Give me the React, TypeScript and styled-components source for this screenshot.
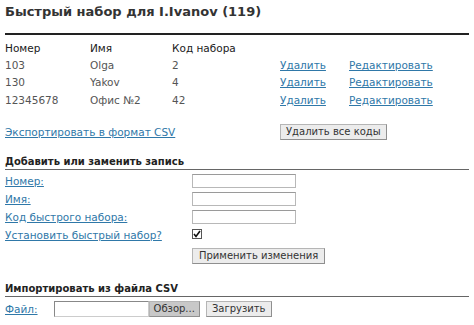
import React from "react";
import styled, { createGlobalStyle } from "styled-components";

const Global = createGlobalStyle`
  html, body { margin: 0; padding: 0; background: #fff; }
  body { font-family: "DejaVu Sans", Verdana, sans-serif; font-size: 10.5px; color: #333; }
`;

const Page = styled.div`
  padding: 3px 5px 0 5px;
  width: 464px;
`;

const Title = styled.h1`
  margin: 0;
  font-size: 13px;
  font-weight: bold;
  color: #333;
  line-height: 18px;
  height: 18px;
`;

const ThickRule = styled.div`
  margin-top: 12px;
  height: 2px;
  background: #222;
`;

const Grid = styled.div`
  margin-top: 4px;
  display: grid;
  grid-template-columns: 85px 82px 108px 69px auto;
  grid-auto-rows: 17.4px;
  align-items: center;
`;

const HeadCell = styled.div`
  color: #1a1a1a;
  font-weight: 500;
`;

const Cell = styled.div`
  color: #555;
  white-space: nowrap;
`;

const Link = styled.a`
  color: #2f78a8;
  text-decoration: underline;
  cursor: pointer;
  white-space: nowrap;
`;

const ActionsRow = styled.div`
  margin-top: 15px;
  display: grid;
  grid-template-columns: 275px auto;
  align-items: center;
`;

const Button = styled.button<{ $dark?: boolean; $pad?: number }>`
  font-family: "DejaVu Sans", Verdana, sans-serif;
  font-size: 10px;
  color: #333;
  height: 16px;
  padding: 0 ${(p) => p.$pad ?? 5}px;
  line-height: 14px;
  background: ${(p) => (p.$dark ? "#c8c8c8" : "#ececec")};
  border: 1px solid #b5b5b5;
  border-right-color: #8f8f8f;
  border-bottom-color: #8f8f8f;
  border-radius: 0;
  margin: 0;
  white-space: nowrap;
  display: block;
`;

const SectionTitle = styled.div<{ $top: number }>`
  margin-top: ${(p) => p.$top}px;
  font-weight: bold;
  font-size: 10px;
  color: #222;
  line-height: 13px;
  padding-bottom: 1px;
  border-bottom: 1px solid #666;
`;

const Form = styled.div`
  margin-top: 2px;
  display: grid;
  grid-template-columns: 187px auto;
  grid-auto-rows: 18px;
  align-items: center;
`;

const TextInput = styled.input`
  box-sizing: border-box;
  display: block;
  width: 104px;
  height: 14px;
  border: 1px solid #b8b8b8;
  border-top-color: #9a9a9a;
  padding: 0;
  margin: 0;
  background: #fff;
`;

const Check = styled.div`
  width: 8px;
  height: 8px;
  border: 1px solid #555;
  background: #fff;
  display: flex;
  align-items: center;
  justify-content: center;
  margin-top: -2px;
`;

const ButtonCell = styled.div`
  grid-column: 2;
  padding-top: 6px;
  justify-self: start;
`;

const FileRow = styled.div`
  margin-top: 4px;
  display: flex;
  align-items: center;
`;

const FileBox = styled.div`
  box-sizing: border-box;
  width: 95px;
  height: 16px;
  border: 1px solid #888;
  border-right-color: #ccc;
  border-bottom-color: #ccc;
  background: #fff;
`;

const Gap = styled.div<{ $w: number }>`
  width: ${(p) => p.$w}px;
`;

const rows = [
  ["103", "Olga", "2"],
  ["130", "Yakov", "4"],
  ["12345678", "Офис №2", "42"],
];

export default function App() {
  return (
    <>
      <Global />
      <Page>
        <Title>Быстрый набор для I.Ivanov (119)</Title>
        <ThickRule />
        <Grid>
          <HeadCell>Номер</HeadCell>
          <HeadCell>Имя</HeadCell>
          <HeadCell>Код набора</HeadCell>
          <div />
          <div />
          {rows.map((r) => (
            <React.Fragment key={r[0]}>
              <Cell>{r[0]}</Cell>
              <Cell>{r[1]}</Cell>
              <Cell>{r[2]}</Cell>
              <Cell>
                <Link>Удалить</Link>
              </Cell>
              <Cell>
                <Link>Редактировать</Link>
              </Cell>
            </React.Fragment>
          ))}
        </Grid>
        <ActionsRow>
          <Link>Экспортировать в формат CSV</Link>
          <div>
            <Button $pad={5}>Удалить все коды</Button>
          </div>
        </ActionsRow>
        <SectionTitle $top={15}>Добавить или заменить запись</SectionTitle>
        <Form>
          <Link>Номер:</Link>
          <div><TextInput /></div>
          <Link>Имя:</Link>
          <div><TextInput /></div>
          <Link>Код быстрого набора:</Link>
          <div><TextInput /></div>
          <Link>Установить быстрый набор?</Link>
          <div>
            <Check>
              <svg width="8" height="8" viewBox="0 0 8 8">
                <path d="M1 4 L3 6.5 L7 1" stroke="#111" strokeWidth="1.6" fill="none" />
              </svg>
            </Check>
          </div>
          <ButtonCell>
            <Button $pad={6}>Применить изменения</Button>
          </ButtonCell>
        </Form>
        <SectionTitle $top={20}>Импортировать из файла CSV</SectionTitle>
        <FileRow>
          <Link>Файл:</Link>
          <Gap $w={16} />
          <FileBox />
          <Button $dark $pad={4}>Обзор...</Button>
          <Gap $w={6} />
          <Button $pad={5}>Загрузить</Button>
        </FileRow>
      </Page>
    </>
  );
}
